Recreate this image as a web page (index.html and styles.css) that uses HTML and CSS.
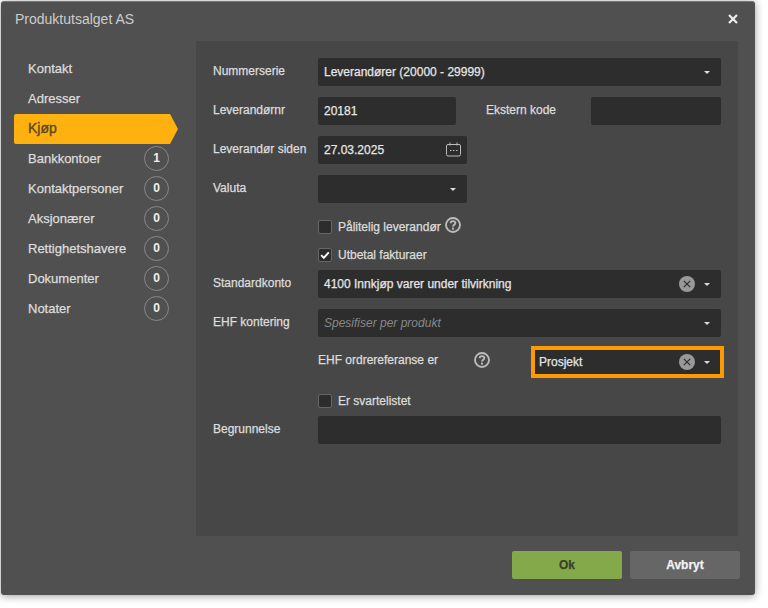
FILE: index.html
```html
<!DOCTYPE html>
<html lang="no">
<head>
<meta charset="utf-8">
<title>Produktutsalget AS</title>
<link rel="stylesheet" href="styles.css">
</head>
<body>
<svg class="defs" width="0" height="0" aria-hidden="true">
  <symbol id="help" viewBox="0 0 16 16">
    <circle cx="8" cy="8" r="7" fill="none" stroke="currentColor" stroke-width="1.9"/>
    <path d="M5.7 6.2c0-1.4 1-2.1 2.300-2.100s2.300.8 2.300 2c0 1.800-2.300 1.700-2.300 3.400" fill="none" stroke="currentColor" stroke-width="1.900"/>
    <rect x="7" y="10.600" width="2" height="2" fill="currentColor"/>
  </symbol>
  <symbol id="clear" viewBox="0 0 16 16">
    <circle cx="8" cy="8" r="8" fill="#999"/>
    <path d="M4.800 4.800l6.400 6.400M11.200 4.800l-6.400 6.400" stroke="#2d2d2d" stroke-width="1.200"/>
  </symbol>
</svg>
<main class="dialog">
  <header class="head">
    <h1 class="title">Produktutsalget AS</h1>
    <svg class="close" viewBox="0 0 10 10" width="10" height="10"><path d="M1 1l8 8M9 1l-8 8" stroke="#eee" stroke-width="2.200"/></svg>
  </header>
  <div class="body">
    <nav class="side">
      <a class="item">Kontakt</a>
      <a class="item">Adresser</a>
      <a class="item active">Kjøp</a>
      <a class="item">Bankkontoer<span class="count">1</span></a>
      <a class="item">Kontaktpersoner<span class="count">0</span></a>
      <a class="item">Aksjonærer<span class="count">0</span></a>
      <a class="item">Rettighetshavere<span class="count">0</span></a>
      <a class="item">Dokumenter<span class="count">0</span></a>
      <a class="item">Notater<span class="count">0</span></a>
    </nav>
    <section class="panel">
      <div class="row">
        <label class="lab">Nummerserie</label>
        <div class="field grow">Leverandører (20000 - 29999)<i class="caret"></i></div>
      </div>
      <div class="row">
        <label class="lab">Leverandørnr</label>
        <div class="field w138">20181</div>
        <label class="lab ext">Ekstern kode</label>
        <div class="field w130"></div>
      </div>
      <div class="row">
        <label class="lab">Leverandør siden</label>
        <div class="field w149">27.03.2025
          <svg class="cal" viewBox="0 0 15 15" width="15" height="15" fill="none" stroke="#bbb"><rect x=".5" y="2.500" width="14" height="11.500" rx="1.500"/><path d="M4 .5v3M11 .5v3"/><path d="M4 8.500h1.500M7 8.500h1.500M10 8.500h1.500" stroke-width="1.200"/></svg>
        </div>
      </div>
      <div class="row">
        <label class="lab">Valuta</label>
        <div class="field w149"><i class="caret"></i></div>
      </div>
      <div class="check first"><span class="box"></span>Pålitelig leverandør<svg class="help small"><use href="#help"/></svg></div>
      <div class="check second"><span class="box"><svg viewBox="0 0 14 14" width="14" height="14"><path d="M3.200 7.200l2.600 2.600 5-5.400" fill="none" stroke="#fff" stroke-width="1.900"/></svg></span>Utbetal fakturaer</div>
      <div class="row after">
        <label class="lab">Standardkonto</label>
        <div class="field grow">4100 Innkjøp varer under tilvirkning<svg class="clear"><use href="#clear"/></svg><i class="caret"></i></div>
      </div>
      <div class="row">
        <label class="lab">EHF kontering</label>
        <div class="field grow ph">Spesifiser per produkt<i class="caret"></i></div>
      </div>
      <div class="row">
        <span class="lab spacer"></span>
        <label class="lab ehf">EHF ordrereferanse er</label>
        <svg class="help big"><use href="#help"/></svg>
        <div class="field focus">Prosjekt<svg class="clear"><use href="#clear"/></svg><i class="caret"></i></div>
      </div>
      <div class="check third"><span class="box"></span>Er svartelistet</div>
      <div class="row last">
        <label class="lab">Begrunnelse</label>
        <div class="field grow"></div>
      </div>
    </section>
  </div>
  <footer class="foot">
    <button class="btn ok">Ok</button>
    <button class="btn cancel">Avbryt</button>
  </footer>
</main>
</body>
</html>
```
FILE: styles.css
```css
* { box-sizing: border-box; }
html, body { margin: 0; height: 100%; background: #fff; }
body { padding: 1px 13px 13px 1px; font: 12px "Liberation Sans", Arial, sans-serif; color: #ddd; -webkit-text-stroke: .25px currentColor; }
.defs { position: absolute; }
.dialog { width: 754px; height: 594px; background: #505050; border-radius: 3px; border-top: 1px solid #777; box-shadow: 0 1px 9px rgba(0,0,0,.4); display: flex; flex-direction: column; }
.head { height: 39px; padding: 0 17px 5px 14px; display: flex; align-items: center; justify-content: space-between; flex: none; }
.title { margin: 0; font-size: 14px; font-weight: 400; color: #ccc; -webkit-text-stroke: 0; }
.body { display: flex; height: 495px; flex: none; }
.side { width: 195px; padding: 13px 0 0 13px; flex: none; }
.item { display: flex; align-items: center; justify-content: space-between; height: 30px; padding: 0 8px 2px 14px; width: 163px; font-size: 13px; color: #ddd; }
.item.active { background: #ffb20f; color: #5a4a20; clip-path: polygon(0 0, 156px 0, 164px 15px, 156px 30px, 0 30px); width: 165px; border-radius: 2px; font-size: 14px; -webkit-text-stroke: .4px currentColor; }
.count { width: 25px; height: 25px; border: 1px solid #888; border-radius: 50%; display: flex; align-items: center; justify-content: center; color: #eee; font-weight: 700; font-size: 12px; -webkit-text-stroke: 0; }
.panel { width: 542px; background: #474747; padding: 17px 17px 0; display: flex; flex-direction: column; }
.row { display: flex; align-items: center; height: 28px; margin-bottom: 11px; flex: none; }
.lab { width: 105px; flex: none; position: relative; top: -1px; }
.field { height: 28px; background: #2d2d2d; border-radius: 2px; display: flex; align-items: center; padding: 0 6px; color: #e6e6e6; position: relative; }
.grow { flex: 1; }
.w138 { width: 138px; }
.w130 { width: 130px; }
.w149 { width: 149px; }
.ext { width: 135px; margin-left: 30px; margin-right: -30px; }
.ph { color: #888; font-style: italic; -webkit-text-stroke: 0; }
.caret { position: absolute; right: 11px; top: 13px; width: 0; height: 0; border-left: 3px solid transparent; border-right: 3px solid transparent; border-top: 3px solid #ddd; }
.cal { position: absolute; right: 6px; top: 6px; }
.clear { position: absolute; right: 26px; top: 6px; width: 16px; height: 16px; }
.check { display: flex; align-items: center; height: 14px; margin-left: 105px; color: #ddd; flex: none; }
.box { width: 14px; height: 14px; background: #2d2d2d; border: 1px solid #666; border-radius: 2px; margin-right: 6px; flex: none; display: flex; }
.box svg { margin: -1px; }
.first { margin-top: 6px; }
.second { margin-top: 14px; }
.after { margin-top: 8px; }
.third { margin-top: 7px; margin-bottom: 8px; }
.help { color: #bbb; }
.help.small { width: 16px; height: 16px; margin: -4px 0 0 4px; }
.help.big { width: 16px; height: 16px; margin-left: 36px; margin-right: 41px; flex: none; position: relative; top: -2px; }
.lab.spacer { width: 105px; }
.lab.ehf { width: 120px; white-space: nowrap; top: -2px; }
.focus { width: 193px; height: 32px; flex: none; border: 4px solid #ff9900; border-radius: 0; padding: 0 4px; margin-right: -3px; }
.focus .caret { right: 10px; top: 11px; }
.focus .clear { right: 25px; top: 4px; }
.foot { flex: 1; display: flex; justify-content: flex-end; gap: 8px; padding: 15px 15px 0 0; }
.btn { width: 110px; height: 28px; border: 0; border-radius: 2px; font: 700 12px "Liberation Sans", Arial, sans-serif; }
.ok { background: #84a94b; color: #3a3f2c; }
.cancel { background: #666; color: #f2f2f2; }
```
